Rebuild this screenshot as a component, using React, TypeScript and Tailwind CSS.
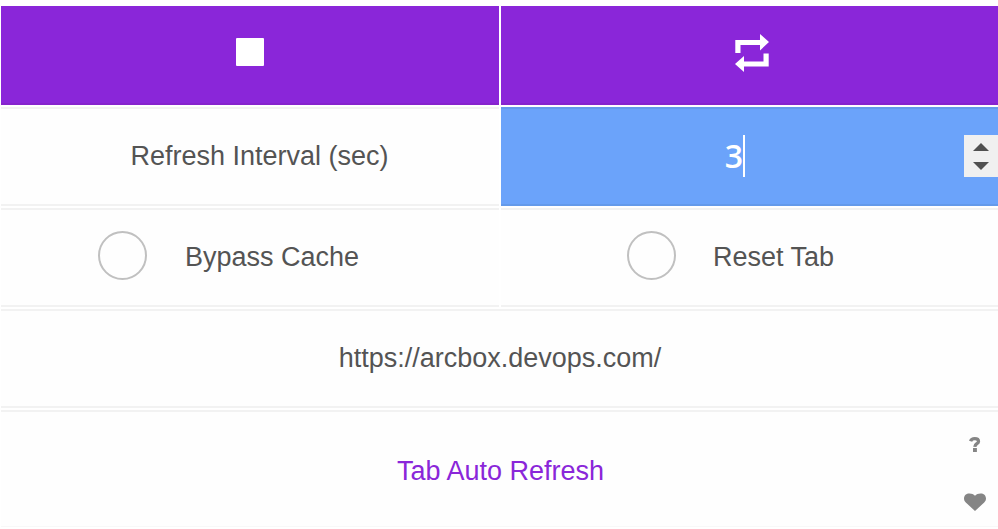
import React from 'react';

const cell = 'border-y-2 border-[#f2f2f2] bg-[#fefefe] flex items-center pb-[2px]';

function Option({ label, className }: { label: string; className: string }) {
  return (
    <label className={`${cell} ${className}`}>
      <span className="mb-[3px] h-[49px] w-[49px] shrink-0 rounded-full border-2 border-[#c0c0c0]" />
      <span className="whitespace-nowrap">{label}</span>
    </label>
  );
}

export default function App() {
  return (
    <main className="h-[529px] w-[998px] overflow-hidden bg-white pl-px pt-[6px] font-['Liberation_Sans',Arial,sans-serif] text-[27px] leading-[32px] text-[#545454]">
      <div className="grid grid-cols-[498px_497px] grid-rows-[99px_99px_99px_99px_117px] gap-[2px]">
        <button className="flex items-center justify-center border-b-2 border-[#8623cd] bg-[#8a26d9]">
          <span className="mt-[-6px] h-[28px] w-[28px] rounded-[1px] bg-white" />
        </button>
        <button className="flex items-center justify-center border-b-2 border-[#8623cd] bg-[#8a26d9]">
          <svg className="mt-[-4px] ml-[4px] h-[38px] w-[34px]" viewBox="0 0 34 38" fill="white">
            <path d="M0.3 19V6H25V0L34 8L25 16.5V11H5.5V19Z" />
            <path d="M33.7 19.5V32.5H9V38L0 30L9 22V27.5H28.5V19.5Z" />
          </svg>
        </button>

        <div className={`${cell} justify-center pl-[19px]`}>Refresh Interval (sec)</div>
        <div className="flex items-center border-y-2 border-[#649aea] bg-[#6ba3fa] pb-[2px]">
          <span className="w-[242px] text-right font-['Open_Sans',sans-serif] text-[32px] font-semibold leading-[42px] text-white">3</span>
          <span className="h-[42px] w-[2px] bg-white" />
          <span className="ml-auto flex h-[42px] w-[34px] flex-col items-center justify-center gap-[11px] bg-[#f0f0f0] pt-[2px]">
            <svg className="h-2 w-4" viewBox="0 0 16 8" fill="#505050"><path d="M0 8L8 0L16 8Z" /></svg>
            <svg className="h-2 w-4" viewBox="0 0 16 8" fill="#505050"><path d="M0 0L8 8L16 0Z" /></svg>
          </span>
        </div>

        <Option label="Bypass Cache" className="gap-[38px] pl-[97px]" />
        <Option label="Reset Tab" className="gap-[37px] pl-[126px]" />

        <div className={`${cell} col-span-2 justify-center pl-px`}>https://arcbox.devops.com/</div>

        <footer className="col-span-2 flex border-t-2 border-b border-t-[#f2f2f2] border-b-[#f8f8f8] bg-[#fefefe]">
          <div className="flex flex-1 items-center justify-center pl-[49px] pt-[4px] text-[#8a26d9]">Tab Auto Refresh</div>
          <div className="flex w-[47px] flex-col items-center pt-[25px]">
            <svg className="h-[15px] w-[12px]" viewBox="0 0 12 15" fill="none">
              <path d="M1.6 4.3C2.2 2.5 3.6 1.7 5.7 1.7C8 1.7 9.5 2.7 9.5 4.4C9.5 6.9 6 6.5 5.8 9.8" stroke="#858585" strokeWidth="3.3" />
              <path d="M4 11H7.9V15H4Z" fill="#858585" />
            </svg>
            <svg className="mt-[41px] h-[18px] w-[22px]" viewBox="0 0 22 18" fill="#858585">
              <path d="M11 18L1.8 9.5C.6 8.4 0 7 0 5.5C0 2.4 2.3.5 5.4.5C8 .5 9.4 1.4 11 2.8C12.6 1.4 14 .5 16.6.5C19.7.5 22 2.4 22 5.5C22 7 21.4 8.4 20.2 9.5Z" />
            </svg>
          </div>
        </footer>
      </div>
    </main>
  );
}
